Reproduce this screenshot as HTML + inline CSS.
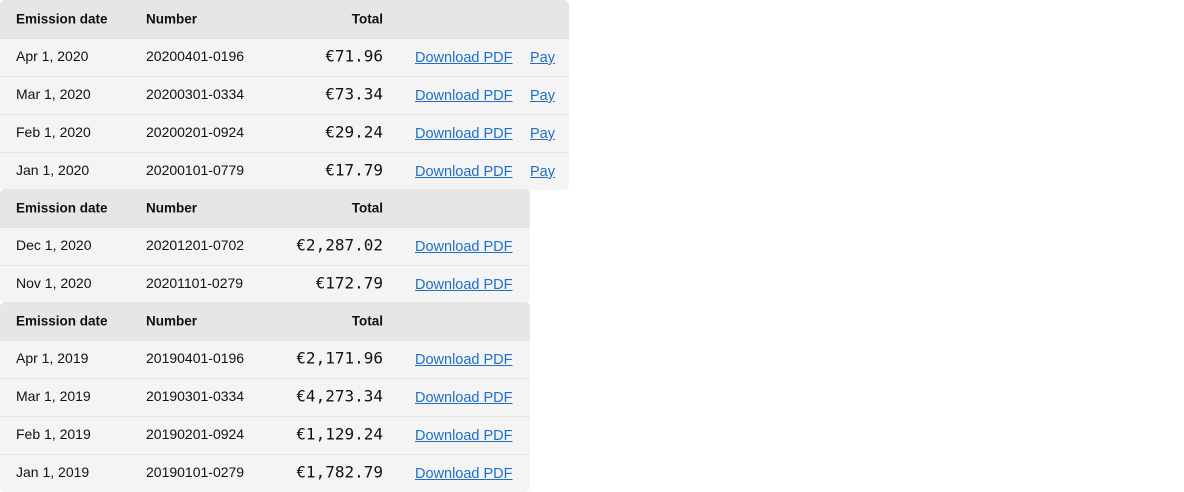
<!DOCTYPE html>
<html><head><style>
body{margin:0;background:#fff;font-family:"Liberation Sans",sans-serif;color:#111;}
.t{position:absolute;left:0;border-radius:5px;overflow:hidden;background:#f4f4f4}
.r{position:relative;height:38px;border-top:1px solid #e4e4e4;box-sizing:border-box}
.r.h{background:#e6e6e6;border-top:none;font-weight:bold;font-size:13.5px}
.r span{position:absolute;top:calc(50% - 1.5px);transform:translateY(-50%);white-space:nowrap}
.r.h span{top:50%}
.d{left:16px;font-size:14px}.n{left:146px;font-size:14px}
.h .d,.h .n{font-size:13.5px}
.tot{font-family:"DejaVu Sans Mono","Liberation Mono",monospace;font-size:16px}
.r span.a,.r span.p{top:calc(50% + 0.5px)}
.a{left:415px;font-size:14.5px;color:#1f6fc5;text-decoration:underline}
.p{left:530px;font-size:14.5px;color:#1f6fc5;text-decoration:underline}
</style></head><body>
<div class="t" style="top:0;width:569px">
<div class="r h"><span class="d">Emission date</span><span class="n">Number</span><span style="right:186px">Total</span></div>
<div class="r"><span class="d">Apr 1, 2020</span><span class="n">20200401-0196</span><span class="tot" style="right:186px">€71.96</span><span class="a">Download PDF</span><span class="p">Pay</span></div>
<div class="r"><span class="d">Mar 1, 2020</span><span class="n">20200301-0334</span><span class="tot" style="right:186px">€73.34</span><span class="a">Download PDF</span><span class="p">Pay</span></div>
<div class="r"><span class="d">Feb 1, 2020</span><span class="n">20200201-0924</span><span class="tot" style="right:186px">€29.24</span><span class="a">Download PDF</span><span class="p">Pay</span></div>
<div class="r"><span class="d">Jan 1, 2020</span><span class="n">20200101-0779</span><span class="tot" style="right:186px">€17.79</span><span class="a">Download PDF</span><span class="p">Pay</span></div>
</div>
<div class="t" style="top:189px;width:530px">
<div class="r h"><span class="d">Emission date</span><span class="n">Number</span><span style="right:147px">Total</span></div>
<div class="r"><span class="d">Dec 1, 2020</span><span class="n">20201201-0702</span><span class="tot" style="right:147px">€2,287.02</span><span class="a">Download PDF</span></div>
<div class="r"><span class="d">Nov 1, 2020</span><span class="n">20201101-0279</span><span class="tot" style="right:147px">€172.79</span><span class="a">Download PDF</span></div>
</div>
<div class="t" style="top:302px;width:530px">
<div class="r h"><span class="d">Emission date</span><span class="n">Number</span><span style="right:147px">Total</span></div>
<div class="r"><span class="d">Apr 1, 2019</span><span class="n">20190401-0196</span><span class="tot" style="right:147px">€2,171.96</span><span class="a">Download PDF</span></div>
<div class="r"><span class="d">Mar 1, 2019</span><span class="n">20190301-0334</span><span class="tot" style="right:147px">€4,273.34</span><span class="a">Download PDF</span></div>
<div class="r"><span class="d">Feb 1, 2019</span><span class="n">20190201-0924</span><span class="tot" style="right:147px">€1,129.24</span><span class="a">Download PDF</span></div>
<div class="r"><span class="d">Jan 1, 2019</span><span class="n">20190101-0279</span><span class="tot" style="right:147px">€1,782.79</span><span class="a">Download PDF</span></div>
</div>
</body></html>
